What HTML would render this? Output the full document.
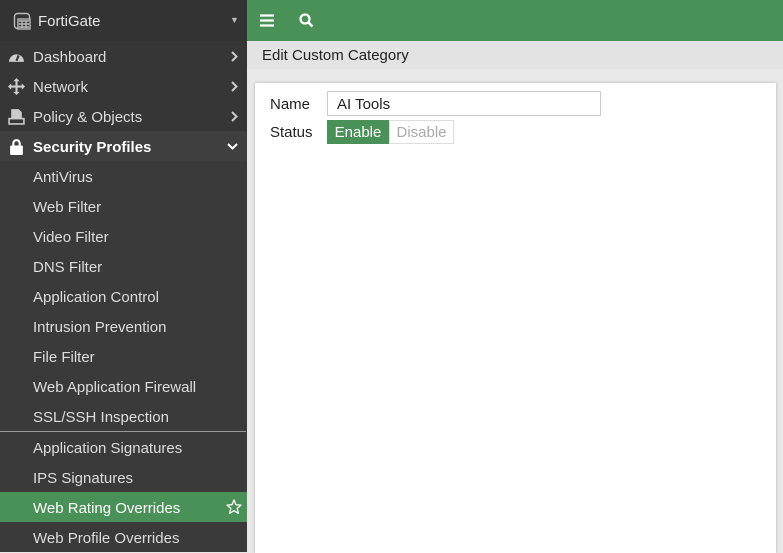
<!DOCTYPE html><html><head><style>
*{margin:0;padding:0;box-sizing:border-box}
body{width:783px;height:551px;overflow:hidden;font-family:"Liberation Sans",sans-serif;font-size:15px;background:#e9e9e9;position:relative}
.sb{position:absolute;left:0;top:0;width:247px;height:551px;background:#363636;color:#ddd}
.hd{height:41px;background:#333;display:flex;align-items:center;padding-left:13px;font-size:15px;color:#e6e6e6;padding-top:2px}
.it{height:30px;display:flex;align-items:center;padding-left:33px;padding-top:2px;color:#ddd;position:relative;font-size:15px}
.it .ic{position:absolute;left:8px;top:7px;width:17px;height:17px}
.it .ar{position:absolute;right:9px;top:10px}
.sub{background:#3a3a3a}
.top{position:absolute;left:247px;top:0;right:0;height:41px;background:#4a9157}
.bar{position:absolute;left:247px;top:41px;right:0;height:28px;background:#e3e3e3;padding-left:15px;line-height:30px;color:#222;font-size:15px}
.card{position:absolute;left:255px;top:83px;width:521px;height:470px;background:#fff;box-shadow:0 0 3px rgba(0,0,0,.25)}
.lbl{position:absolute;left:15px;color:#222;font-size:15px}
</style></head><body>
<div class="sb">
<div class="hd"><svg width="20" height="20" viewBox="0 0 20 20" fill="none" stroke="#bbb" stroke-width="1.4"><rect x="1.5" y="1.5" width="15" height="15" rx="3"/><rect x="5" y="7" width="12" height="10" fill="#333"/><path d="M6 9h10M6 12h10M6 15h10M9 9v7M13 9v7"/></svg><span style="margin-left:5px">FortiGate</span><span style="position:absolute;left:230px;top:15px;font-size:9px;color:#bbb">▼</span></div>
<div class="it"><svg class="ic" viewBox="0 0 16 16"><path d="M1 13a7 7 0 1 1 14 0z" fill="#ccc"/><path d="M8 12l2-5" stroke="#363636" stroke-width="2"/></svg>Dashboard<svg class="ar" width="7" height="11"><path d="M1 1l4.5 4.5L1 10" stroke="#ccc" stroke-width="2" fill="none"/></svg></div>
<div class="it"><svg class="ic" viewBox="0 0 16 16" fill="#ccc"><path d="M8 0l3 3H9v4h4V5l3 3-3 3V9H9v4h2l-3 3-3-3h2V9H3v2L0 8l3-3v2h4V3H5z"/></svg>Network<svg class="ar" width="7" height="11"><path d="M1 1l4.5 4.5L1 10" stroke="#ccc" stroke-width="2" fill="none"/></svg></div>
<div class="it"><svg class="ic" viewBox="0 0 16 16" fill="#ccc"><path d="M3 1h7l3 3v6H3z"/><rect x="1" y="10" width="14" height="5" fill="none" stroke="#ccc" stroke-width="1.5"/></svg>Policy &amp; Objects<svg class="ar" width="7" height="11"><path d="M1 1l4.5 4.5L1 10" stroke="#ccc" stroke-width="2" fill="none"/></svg></div>
<div class="it" style="background:#3f3f3f;color:#fff;font-weight:bold"><svg class="ic" viewBox="0 0 16 16" fill="#fff"><path d="M4 7V5a4 4 0 0 1 8 0v2h-2V5a2 2 0 0 0-4 0v2z"/><rect x="2" y="7" width="12" height="9" rx="1"/></svg>Security Profiles<svg class="ar" style="top:12px" width="11" height="7"><path d="M1 1l4.5 4.5L10 1" stroke="#fff" stroke-width="2" fill="none"/></svg></div>
<div class="it sub">AntiVirus</div>
<div class="it sub">Web Filter</div>
<div class="it sub">Video Filter</div>
<div class="it sub">DNS Filter</div>
<div class="it sub">Application Control</div>
<div class="it sub">Intrusion Prevention</div>
<div class="it sub">File Filter</div>
<div class="it sub">Web Application Firewall</div>
<div class="it sub">SSL/SSH Inspection</div>
<div style="height:1px;background:#999;margin-right:1px"></div>
<div class="it sub">Application Signatures</div>
<div class="it sub">IPS Signatures</div>
<div class="it" style="background:#4a9157;color:#fff">Web Rating Overrides<svg class="ar" style="top:7px;right:5px" width="16" height="16" viewBox="0 0 16 16"><path d="M8 1l2 4.7 5 .4-3.8 3.3 1.2 5L8 11.7 3.6 14.4l1.2-5L1 6.1l5-.4z" fill="none" stroke="#fff" stroke-width="1.3" stroke-linejoin="round"/></svg></div>
<div class="it sub">Web Profile Overrides</div>
</div>
<div class="top"><svg style="position:absolute;left:13px;top:14px" width="14" height="13"><path d="M0 1.5h14M0 6.5h14M0 11.5h14" stroke="#fff" stroke-width="2.2"/></svg><svg style="position:absolute;left:52px;top:13px" width="15" height="15"><circle cx="6" cy="6" r="4.5" fill="none" stroke="#fff" stroke-width="2.2"/><path d="M9.5 9.5l4 4" stroke="#fff" stroke-width="2.6"/></svg></div>
<div class="bar">Edit Custom Category</div>
<div class="card">
<div class="lbl" style="top:13px">Name</div>
<div style="position:absolute;left:72px;top:8px;width:274px;height:25px;border:1px solid #ccc;padding-left:9px;line-height:25px;color:#222;font-size:15px">AI Tools</div>
<div class="lbl" style="top:41px">Status</div>
<div style="position:absolute;left:72px;top:37px;width:62px;height:24px;background:#4a9157;color:#fff;line-height:26px;text-align:center;font-size:15px">Enable</div>
<div style="position:absolute;left:134px;top:37px;width:65px;height:24px;border:1px solid #ddd;color:#aaa;line-height:24px;text-align:center;font-size:15px">Disable</div>
</div>
</body></html>
